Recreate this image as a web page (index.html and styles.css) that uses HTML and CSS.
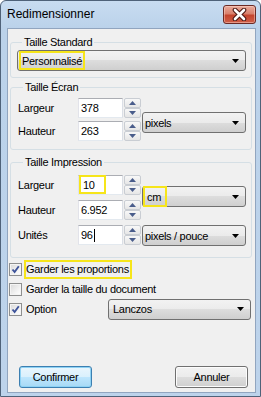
FILE: index.html
```html
<!DOCTYPE html>
<html lang="fr">
<head>
<meta charset="utf-8">
<title>Redimensionner</title>
<link rel="stylesheet" href="styles.css">
</head>
<body>
<div class="window">
  <div class="titlebar">
    <span class="title">Redimensionner</span>
    <div class="close">
      <svg width="15" height="13" viewBox="0 0 15 13">
        <path d="M3 2 L12 11 M12 2 L3 11" stroke="#4a1612" stroke-width="4.6" stroke-linecap="round" fill="none"/>
        <path d="M3 2 L12 11 M12 2 L3 11" stroke="#ffffff" stroke-width="2.6" stroke-linecap="round" fill="none"/>
      </svg>
    </div>
  </div>
  <div class="client">
    <fieldset class="group g1">
      <legend>Taille Standard</legend>
      <div class="combo c-std"><span class="hl">Personnalisé</span><svg class="arrow" width="7" height="4" viewBox="0 0 7 4"><polygon points="0,0 7,0 3.5,4" fill="#000"/></svg></div>
    </fieldset>

    <fieldset class="group g2">
      <legend>Taille Écran</legend>
      <div class="grid grid2">
        <span class="lbl">Largeur</span>
        <div class="field"><span class="val">378</span></div>
        <div class="spin"><div class="sb"><svg width="7" height="4" viewBox="0 0 7 4"><polygon points="0,4 7,4 3.5,0" fill="#4a5d8b"/></svg></div><div class="sb"><svg width="7" height="4" viewBox="0 0 7 4"><polygon points="0,0 7,0 3.5,4" fill="#4a5d8b"/></svg></div></div>
        <div class="combo unit u-screen"><span class="txt">pixels</span><svg class="arrow" width="7" height="4" viewBox="0 0 7 4"><polygon points="0,0 7,0 3.5,4" fill="#000"/></svg></div>
        <span class="lbl">Hauteur</span>
        <div class="field"><span class="val">263</span></div>
        <div class="spin"><div class="sb"><svg width="7" height="4" viewBox="0 0 7 4"><polygon points="0,4 7,4 3.5,0" fill="#4a5d8b"/></svg></div><div class="sb"><svg width="7" height="4" viewBox="0 0 7 4"><polygon points="0,0 7,0 3.5,4" fill="#4a5d8b"/></svg></div></div>
      </div>
    </fieldset>

    <fieldset class="group g3">
      <legend>Taille Impression</legend>
      <div class="grid grid3">
        <span class="lbl">Largeur</span>
        <div class="field"><span class="hl hl-in">10</span></div>
        <div class="spin"><div class="sb"><svg width="7" height="4" viewBox="0 0 7 4"><polygon points="0,4 7,4 3.5,0" fill="#4a5d8b"/></svg></div><div class="sb"><svg width="7" height="4" viewBox="0 0 7 4"><polygon points="0,0 7,0 3.5,4" fill="#4a5d8b"/></svg></div></div>
        <div class="combo unit u-cm"><span class="hl hl-cm">cm</span><svg class="arrow" width="7" height="4" viewBox="0 0 7 4"><polygon points="0,0 7,0 3.5,4" fill="#000"/></svg></div>
        <span class="lbl">Hauteur</span>
        <div class="field"><span class="val">6.952</span></div>
        <div class="spin"><div class="sb"><svg width="7" height="4" viewBox="0 0 7 4"><polygon points="0,4 7,4 3.5,0" fill="#4a5d8b"/></svg></div><div class="sb"><svg width="7" height="4" viewBox="0 0 7 4"><polygon points="0,0 7,0 3.5,4" fill="#4a5d8b"/></svg></div></div>
        <span class="lbl">Unités</span>
        <div class="field focus"><span class="val">96</span><span class="caret"></span></div>
        <div class="spin"><div class="sb"><svg width="7" height="4" viewBox="0 0 7 4"><polygon points="0,4 7,4 3.5,0" fill="#4a5d8b"/></svg></div><div class="sb"><svg width="7" height="4" viewBox="0 0 7 4"><polygon points="0,0 7,0 3.5,4" fill="#4a5d8b"/></svg></div></div>
        <div class="combo unit u-ppi"><span class="txt">pixels / pouce</span><svg class="arrow" width="7" height="4" viewBox="0 0 7 4"><polygon points="0,0 7,0 3.5,4" fill="#000"/></svg></div>
      </div>
    </fieldset>

    <div class="checks">
      <div class="check">
        <span class="box"><svg width="9" height="9" viewBox="0 0 9 9"><path d="M1.5 4.5 L3.6 7 L7.8 1.2" stroke="#3d539a" stroke-width="1.9" fill="none"/></svg></span>
        <span class="ctext hl-check">Garder les proportions</span>
      </div>
      <div class="check">
        <span class="box"></span>
        <span class="ctext">Garder la taille du document</span>
      </div>
      <div class="check">
        <span class="box"><svg width="9" height="9" viewBox="0 0 9 9"><path d="M1.5 4.5 L3.6 7 L7.8 1.2" stroke="#3d539a" stroke-width="1.9" fill="none"/></svg></span>
        <span class="ctext">Option</span>
        <div class="combo c-opt"><span class="txt">Lanczos</span><svg class="arrow" width="7" height="4" viewBox="0 0 7 4"><polygon points="0,0 7,0 3.5,4" fill="#000"/></svg></div>
      </div>
    </div>

    <div class="buttons">
      <div class="btn primary">Confirmer</div>
      <div class="btn">Annuler</div>
    </div>
  </div>
</div>
</body>
</html>
```

FILE: styles.css
```css
* {
  box-sizing: border-box;
}

body {
  margin: 0;
  font-family: "Liberation Sans", Arial, sans-serif;
  font-size: 11px;
  letter-spacing: -0.3px;
  color: #000;
  background: #ffffff;
}

.window {
  width: 261px;
  height: 397px;
  border: 1px solid #4f6279;
  border-radius: 6px 6px 0 0;
  background: linear-gradient(#c8dcf1 0px, #bbd2ea 27px, #bdd3eb 100%);
  padding: 0 4px 3px 6px;
  display: flex;
  flex-direction: column;
}

.titlebar {
  height: 27px;
  display: flex;
  align-items: flex-start;
  flex: none;
}

.title {
  font-size: 12px;
  letter-spacing: 0;
  line-height: 27px;
  color: #000;
}

.close {
  margin-left: auto;
  margin-top: 4px;
  width: 33px;
  height: 19px;
  border: 1px solid #6b2a25;
  border-radius: 3px;
  background: linear-gradient(#e9ab9c 0%, #d9806c 45%, #c4442d 55%, #cf6049 100%);
  box-shadow: inset 0 0 0 1px rgba(255, 220, 210, 0.45);
  display: flex;
  align-items: center;
  justify-content: center;
}

.client {
  flex: 1;
  border: 1px solid #91a5bf;
  background: #f0f0f0;
  display: flex;
  flex-direction: column;
}

fieldset.group {
  margin: 0 3px 0 2px;
  border: 1px solid #d5dfe5;
  border-radius: 3px;
  padding: 0;
  min-width: 0;
}

legend {
  margin-left: 5px;
  padding: 0 2px;
  line-height: 13px;
}

.g1 {
  margin-top: 7px !important;
  padding: 1px 0 6px 6px !important;
}

.g2 {
  margin-top: 3px !important;
  padding: 4px 0 8px 7px !important;
}

.g3 {
  margin-top: 6px !important;
  padding: 6px 0 12px 7px !important;
}

.combo {
  height: 21px;
  border: 1px solid #707070;
  border-radius: 3px;
  background: linear-gradient(#f2f2f2 0%, #ebebeb 50%, #dddddd 50%, #cfcfcf 100%);
  display: flex;
  align-items: center;
}

.combo .arrow {
  margin-left: auto;
  margin-right: 6px;
  flex: none;
}

.c-std {
  width: 229px;
  padding-left: 1px;
}

.hl {
  border: 2px solid #f6e51a;
  align-self: stretch;
  display: flex;
  align-items: center;
  padding: 0 1px;
}

.grid {
  display: grid;
  grid-template-columns: 59px 45px 17px 104px;
  column-gap: 1px;
  grid-auto-rows: 20px;
}

.grid2 {
  row-gap: 3px;
}

.grid3 {
  row-gap: 5px;
}

.lbl {
  display: flex;
  align-items: center;
}

.field {
  background: #fff;
  border: 1px solid;
  border-color: #abadb3 #dbdfe6 #e3e9ef #e2e3ea;
  display: flex;
  align-items: center;
  padding-left: 2px;
}

.field .val {
  line-height: 13px;
}

.caret {
  width: 1px;
  height: 13px;
  background: #000;
  margin-left: 1px;
}

.hl-in {
  margin-left: -2px;
  width: 27px;
  margin-top: -1px;
  margin-bottom: 0;
  padding-left: 2px;
}

.spin {
  display: flex;
  flex-direction: column;
}

.sb {
  height: 10px;
  border: 1px solid #c9cdd3;
  border-radius: 2px;
  background: linear-gradient(#f8f8f8, #e6e6e6);
  display: flex;
  align-items: center;
  justify-content: center;
}

.unit {
  grid-column: 4;
  align-self: start;
}

.unit .txt {
  padding-left: 2px;
}

.u-screen {
  grid-row: 1 / span 2;
  margin-top: 14px;
}

.u-cm {
  grid-row: 1 / span 2;
  margin-top: 11px;
}

.hl-cm {
  width: 24px;
  padding-left: 2px;
  margin-top: -1px;
  margin-bottom: -1px;
}

.u-ppi {
  grid-row: 3;
}

.checks {
  margin-top: 1px;
  margin-left: 1px;
}

.check {
  height: 20px;
  display: flex;
  align-items: center;
}

.box {
  width: 13px;
  height: 13px;
  border: 1px solid #8e8f8f;
  background: linear-gradient(135deg, #d8d8d8 0%, #f6f6f6 70%, #ffffff 100%);
  box-shadow: inset 0 0 0 1px #f4f4f4;
  margin-right: 2px;
  display: flex;
  align-items: center;
  justify-content: center;
  flex: none;
}

.ctext {
  border: 2px solid transparent;
  height: 19px;
  display: flex;
  align-items: center;
  padding-right: 1px;
}

.hl-check {
  border-color: #f6e51a;
}

.c-opt {
  margin-left: auto;
  margin-right: 4px;
  width: 143px;
}

.c-opt .txt {
  padding-left: 4px;
}

.buttons {
  margin-top: auto;
  display: flex;
  justify-content: space-between;
  padding: 0 7px 4px 11px;
}

.btn {
  width: 73px;
  height: 22px;
  border: 1px solid #707070;
  border-radius: 3px;
  background: linear-gradient(#f2f2f2 0%, #ebebeb 50%, #dddddd 50%, #cfcfcf 100%);
  box-shadow: inset 0 0 0 1px #fcfcfc;
  display: flex;
  align-items: center;
  justify-content: center;
}

.btn.primary {
  border-color: #3c7fb1;
  background: linear-gradient(#eaf6fd 0%, #d9f0fc 50%, #bee6fd 50%, #a7d9f5 100%);
  box-shadow: inset 0 0 0 1px #8ed2f4;
}
```
